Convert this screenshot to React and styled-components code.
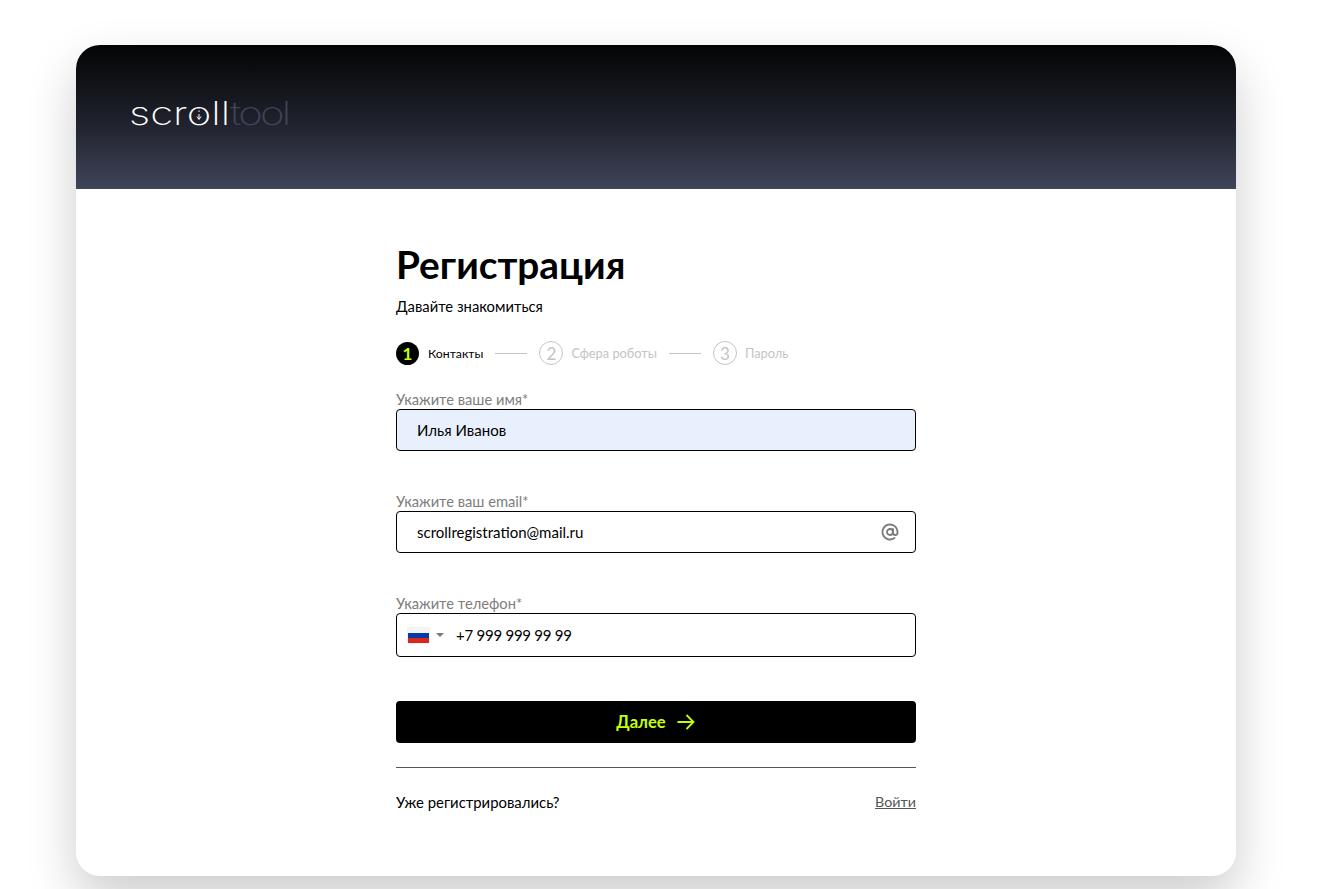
import React from "react";
import styled, { createGlobalStyle } from "styled-components";

const FONT = `"Lato", "Noto Sans", "Liberation Sans", sans-serif`;
const Global = createGlobalStyle`
  html, body { margin: 0; padding: 0; background: #fff; overflow: hidden; }
  body { font-family: ${FONT}; color: #000; }
`;
const Page = styled.div`
  box-sizing: border-box;
  width: 1334px;
  height: 889px;
  padding: 45px 98px 13px 76px;
`;
const Card = styled.main`
  height: 831px;
  border-radius: 24px;
  background: #fff;
  box-shadow: 0 22px 50px rgba(0, 0, 0, 0.2);
  overflow: hidden;
`;
const Header = styled.header`
  height: 144px;
  box-sizing: border-box;
  padding: 46px 0 0 53px;
  background: linear-gradient(180deg, #030405 0%, #0b0c0f 15%, #1d2029 50%, #3f4459 100%);
`;
const Logo = styled.div`
  position: relative;
  width: 161px;
  height: 44px;
`;
const LogoText = styled.div`
  display: inline-flex;
  font-family: "Inter", "Liberation Sans", sans-serif;
  font-size: 33px;
  line-height: 44px;
  transform: scaleX(1.27);
  transform-origin: 0 0;
`;
const LogoPart = styled.span`
  color: ${(p) => p.$color};
  font-weight: 200;
  letter-spacing: ${(p) => p.$spacing}px;
`;
const LogoMark = styled.svg`
  position: absolute;
  left: 67px;
  top: 16px;
`;
const Form = styled.section`
  width: 520px;
  margin-left: 320px;
  padding-top: 50px;
`;
const Title = styled.h1`
  margin: 0;
  font-size: 38.8px;
  line-height: 50px;
  font-weight: 700;
`;
const Subtitle = styled.p`
  margin: 7px 0 0;
  font-size: 14.8px;
  line-height: 20px;
`;
const Steps = styled.ol`
  list-style: none;
  margin: 25px 0 0;
  padding: 0;
  height: 24px;
  display: flex;
  align-items: center;
`;
const Step = styled.li`
  display: flex;
  align-items: center;
  gap: ${(p) => (p.$active ? 9 : 8)}px;
  font-size: ${(p) => (p.$active ? 12.3 : 12.8)}px;
  color: ${(p) => (p.$active ? "#000" : "#c4c4c4")};
`;
const Bullet = styled.span`
  box-sizing: border-box;
  width: ${(p) => (p.$active ? 23 : 24)}px;
  height: ${(p) => (p.$active ? 23 : 24)}px;
  border-radius: 50%;
  display: flex;
  align-items: center;
  justify-content: center;
  font-size: 17px;
  font-weight: ${(p) => (p.$active ? 700 : 400)};
  background: ${(p) => (p.$active ? "#000" : "#fff")};
  color: ${(p) => (p.$active ? "#c6ff00" : "#c4c4c4")};
  border: ${(p) => (p.$active ? "none" : "1px solid #c4c4c4")};
`;
const Connector = styled.span`
  width: 32px;
  height: 1px;
  margin: 0 12px;
  background: #c4c4c4;
`;
const Field = styled.div`
  margin-top: ${(p) => p.$top}px;
`;
const Label = styled.label`
  display: block;
  font-size: 14.7px;
  line-height: 14px;
  height: 17px;
  color: #7d7d7d;
`;
const InputBox = styled.div`
  box-sizing: border-box;
  height: ${(p) => p.$height || 42}px;
  display: flex;
  align-items: center;
  padding: ${(p) => p.$padding || "0 16px 0 20px"};
  border: 1px solid #000;
  border-radius: 4px;
  background: ${(p) => p.$bg || "#fff"};
  font-size: 15px;
`;
const Value = styled.span`
  flex: 1;
  letter-spacing: ${(p) => p.$spacing || 0}px;
`;
const Flag = styled.span`
  width: 21px;
  height: 15px;
  display: block;
  background: linear-gradient(180deg, #f5f5f5 0 33%, #0a3aa8 33% 66%, #d8291f 66%);
  box-shadow: 0 0 1px rgba(0, 0, 0, 0.3);
`;
const Caret = styled.span`
  width: 0;
  height: 0;
  margin: 0 12px 0 7px;
  border-left: 4.5px solid transparent;
  border-right: 4.5px solid transparent;
  border-top: 4px solid #777;
`;
const NextButton = styled.button`
  width: 100%;
  height: 42px;
  margin-top: 44px;
  display: flex;
  align-items: center;
  justify-content: center;
  gap: 10px;
  border: 0;
  border-radius: 4px;
  background: #000;
  color: #c6ff00;
  font: 700 16.6px ${FONT};
`;
const Divider = styled.hr`
  margin: 24px 0 0;
  border: 0;
  height: 1px;
  background: #555;
`;
const Footer = styled.div`
  margin-top: 24px;
  display: flex;
  justify-content: space-between;
  align-items: center;
  font-size: 14.9px;
  line-height: 20px;
`;
const Login = styled.a`
  color: #555;
  font-size: 14.3px;
  text-decoration: underline;
`;

export default function App() {
  return (
    <Page>
      <Global />
      <Card>
        <Header>
          <Logo>
            <LogoText>
              <LogoPart $color="#ffffff" $spacing={0}>scroll</LogoPart>
              <LogoPart $color="#3f4459" $spacing={-2.2}>tool</LogoPart>
            </LogoText>
            <LogoMark width="6" height="14" viewBox="0 0 6 14" fill="none" stroke="#fff" strokeWidth="1">
              <path d="M3 0v1.5M3 3.5v1.5M3 7v5M1 9.5l2 3 2-3" />
            </LogoMark>
          </Logo>
        </Header>
        <Form>
          <Title>Регистрация</Title>
          <Subtitle>Давайте знакомиться</Subtitle>
          <Steps>
            <Step $active>
              <Bullet $active>1</Bullet>Контакты
            </Step>
            <Connector />
            <Step>
              <Bullet>2</Bullet>Сфера роботы
            </Step>
            <Connector />
            <Step>
              <Bullet>3</Bullet>Пароль
            </Step>
          </Steps>
          <Field $top={27}>
            <Label>Укажите ваше имя*</Label>
            <InputBox $bg="#e8f0fe"><Value>Илья Иванов</Value></InputBox>
          </Field>
          <Field $top={43}>
            <Label>Укажите ваш email*</Label>
            <InputBox>
              <Value>scrollregistration@mail.ru</Value>
              <svg width="18" height="18" viewBox="0 0 24 24" fill="none" stroke="#7a7a7a" strokeWidth="2.4" strokeLinecap="round" strokeLinejoin="round">
                <circle cx="12" cy="12" r="4" />
                <path d="M16 8v5a3 3 0 0 0 6 0v-1a10 10 0 1 0-4 8" />
              </svg>
            </InputBox>
          </Field>
          <Field $top={43}>
            <Label>Укажите телефон*</Label>
            <InputBox $height={44} $padding="0 16px 0 11px">
              <Flag />
              <Caret />
              <Value $spacing={-0.25}>+7 999 999 99 99</Value>
            </InputBox>
          </Field>
          <NextButton>
            Далее
            <svg width="20" height="18" viewBox="0 0 20 18" fill="none" stroke="#c6ff00" strokeWidth="1.8">
              <path d="M1.5 9h16M10.5 2l7 7-7 7" />
            </svg>
          </NextButton>
          <Divider />
          <Footer>
            <span>Уже регистрировались?</span>
            <Login>Войти</Login>
          </Footer>
        </Form>
      </Card>
    </Page>
  );
}
